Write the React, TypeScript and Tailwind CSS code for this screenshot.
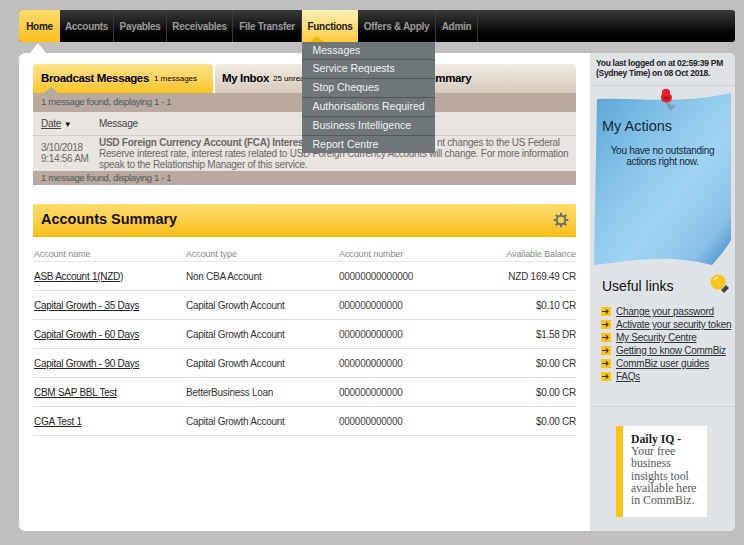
const navItems = [
  { label: "Home", w: "w-[41px]", active: "home" },
  { label: "Accounts", w: "w-[54px]" },
  { label: "Payables", w: "w-[53px]" },
  { label: "Receivables", w: "w-[66px]" },
  { label: "File Transfer", w: "w-[69px]" },
  { label: "Functions", w: "w-[56px]", active: "open" },
  { label: "Offers & Apply", w: "w-[78px]" },
  { label: "Admin", w: "w-[42px]" },
]

const menuItems = ["Messages", "Service Requests", "Stop Cheques", "Authorisations Required", "Business Intelligence", "Report Centre"]

const accounts = [
  { name: "ASB Account 1(NZD)", type: "Non CBA Account", number: "00000000000000", balance: "NZD 169.49 CR" },
  { name: "Capital Growth - 35 Days", type: "Capital Growth Account", number: "000000000000", balance: "$0.10 CR" },
  { name: "Capital Growth - 60 Days", type: "Capital Growth Account", number: "000000000000", balance: "$1.58 DR" },
  { name: "Capital Growth - 90 Days", type: "Capital Growth Account", number: "000000000000", balance: "$0.00 CR" },
  { name: "CBM SAP BBL Test", type: "BetterBusiness Loan", number: "000000000000", balance: "$0.00 CR" },
  { name: "CGA Test 1", type: "Capital Growth Account", number: "000000000000", balance: "$0.00 CR" },
]

const usefulLinks = ["Change your password", "Activate your security token", "My Security Centre", "Getting to know CommBiz", "CommBiz user guides", "FAQs"]

function Notch({ color, left }: { color: string; left: string }) {
  return (
    <svg className={`absolute bottom-0 ${left}`} width="14" height="6" viewBox="0 0 14 6">
      <path d="M0 6 7 0l7 6z" fill={color} />
    </svg>
  )
}

function Nav() {
  return (
    <nav className="flex h-[32px] rounded-[3px] bg-gradient-to-b from-[#3a3a3a] via-[#171717] to-black">
      {navItems.map((item) => (
        <div
          key={item.label}
          className={`relative flex ${item.w} shrink-0 items-center justify-center whitespace-nowrap text-[10px] font-bold tracking-[-0.3px] ${
            item.active === "home"
              ? "rounded-l-[3px] bg-gradient-to-b from-[#fedb6a] to-[#fbbf0a] text-[#1a1a1a]"
              : item.active === "open"
                ? "bg-gradient-to-b from-[#fff0b4] to-[#fbca32] text-[#1a1a1a]"
                : "border-r border-[#3a3a3a] text-[#9a9a9a]"
          }`}
        >
          {item.label}
          {item.active === "open" && <Notch color="#f5b400" left="left-[8px]" />}
        </div>
      ))}
    </nav>
  )
}

function FunctionsMenu() {
  return (
    <div className="absolute left-[302px] top-[42px] z-20 w-[133px]">
      {menuItems.map((item) => (
        <div key={item} className="flex h-[19px] items-center border-b border-[#50585c] bg-[#6e7679] pl-[10.5px] text-[10.5px] text-[#f2f2f2] first:h-[18px] last:h-[17px] last:border-b-0">
          {item}
        </div>
      ))}
    </div>
  )
}

function MessagesPanel() {
  return (
    <section className="text-[10px] tracking-[-0.26px] text-[#6c6866]">
      <div className="flex h-[29px] gap-[2px]">
        <div className="relative flex w-[180px] items-center rounded-t-[4px] bg-gradient-to-b from-[#fee388] to-[#fcc419] pl-[8px] text-black">
          <span className="text-[11.5px] font-bold tracking-[-0.36px]">Broadcast Messages</span>
          <span className="ml-[5px] text-[8px] tracking-normal">1 messages</span>
          <Notch color="#b9a99f" left="left-[11px]" />
        </div>
        <div className="flex flex-1 items-center rounded-t-[4px] bg-gradient-to-b from-[#f0ebe4] to-[#d8cabb] pl-[7px] text-black">
          <span className="text-[11.5px] font-bold tracking-[-0.36px]">My Inbox</span>
          <span className="ml-[4px] text-[8px] tracking-normal">25 unread</span>
          <span className="ml-[60px] text-[11.5px] font-bold tracking-[-0.36px]">Accounts Summary</span>
        </div>
      </div>
      <div className="flex h-[19px] items-center bg-[#b9a99f] pl-[8px] text-[9.5px] tracking-[-0.36px] text-[#4c5a5e]">1 message found, displaying 1 - 1</div>
      <div className="flex h-[23px] items-center bg-[#e8e4df] pl-[8px] text-[#444]">
        <span className="w-[58px]">
          <span className="underline">Date</span> <span className="text-[8px] text-black">▼</span>
        </span>
        <span>Message</span>
      </div>
      <div className="flex h-[36px] items-start border-t border-[#d4cec8] bg-[#e8e4df] pl-[8px] leading-[11px]">
        <div className="w-[58px] shrink-0 pt-[6px] tracking-[-0.3px]">
          3/10/2018
          <br />
          9:14:56 AM
        </div>
        <div className="whitespace-nowrap pt-[1px]">
          <span className="inline-block w-[338px] overflow-hidden align-bottom font-bold">USD Foreign Currency Account (FCA) Interest Rate</span>
          <span>nt changes to the US Federal</span>
          <br />
          Reserve interest rate, interest rates related to USD Foreign Currency Accounts will change. For more information
          <br />
          speak to the Relationship Manager of this service.
        </div>
      </div>
      <div className="flex h-[14px] items-center bg-[#b9a99f] pl-[8px] text-[9.5px] tracking-[-0.36px] text-[#4c5a5e]">1 message found, displaying 1 - 1</div>
    </section>
  )
}

function AccountsSummary() {
  return (
    <section className="mt-[19px]">
      <div className="flex h-[33px] items-center justify-between bg-gradient-to-b from-[#fedb6a] to-[#fbbf0a] pb-[2px] pl-[8px] pr-[7px]">
        <h2 className="text-[14.5px] font-bold text-[#111]">Accounts Summary</h2>
        <svg width="16" height="16" viewBox="0 0 24 24" fill="none" stroke="#6b7070" strokeWidth="3">
          <circle cx="12" cy="12" r="6.5" />
          <path d="M12 1v4M12 19v4M1 12h4M19 12h4M4.200 4.200l2.900 2.900M16.900 16.900l2.900 2.900M4.200 19.800l2.900-2.900M16.900 7.100l2.900-2.900" />
        </svg>
      </div>
      <div className="mt-[11px] flex h-[14px] border-b border-[#e6e6e6] text-[9px] tracking-[-0.1px] text-[#888]">
        <span className="w-[153px] pl-[1px]">Account name</span>
        <span className="w-[153px]">Account type</span>
        <span>Account number</span>
        <span className="ml-auto">Available Balance</span>
      </div>
      {accounts.map((a) => (
        <div key={a.name} className="flex h-[29px] items-center border-b border-[#dedede] text-[10px] tracking-[-0.27px] text-[#333]">
          <span className="w-[153px] pl-[1px] text-[#222] underline">{a.name}</span>
          <span className="w-[152px]">{a.type}</span>
          <span className="pl-[1px] text-[#444]">{a.number}</span>
          <span className="ml-auto">{a.balance}</span>
        </div>
      ))}
    </section>
  )
}

function StickyNote() {
  return (
    <div className="relative mx-[4px] mt-[7px] h-[172px] w-[137px]">
      <svg className="absolute inset-0" width="137" height="172" viewBox="0 0 137 172">
        <defs>
          <linearGradient id="note" x1="0" y1="0" x2="1" y2="1">
            <stop offset="0" stopColor="#5aa5d6" />
            <stop offset="0.3" stopColor="#82c1e6" />
            <stop offset="0.6" stopColor="#a0d4f2" />
            <stop offset="0.85" stopColor="#88c0e6" />
            <stop offset="1" stopColor="#3f86c6" />
          </linearGradient>
        </defs>
        <path d="M3 6C40 4 85 12 137 0L137 147C132 156 125 164 118 172 70 160 40 168 0 172Z" fill="url(#note)" />
      </svg>
      <svg className="absolute left-[65px] top-[-6px]" width="20" height="26" viewBox="0 0 20 26">
        <path d="M8 15l5 8M9 21l7-2" stroke="#7f9fb2" strokeWidth="3" />
        <path d="M3 4a4.500 4 0 0 1 8 0l0 3c2 1 2.500 3 1.500 5.500a5 3 0 0 1-10 0C1.500 10 2 8 3 7z" fill="#e3202c" />
        <ellipse cx="7.500" cy="11" rx="3.500" ry="1.800" fill="#b8141e" />
      </svg>
      <div className="relative pl-[8px] pt-[24px] text-[#13283a]">
        <h3 className="text-[14.5px] leading-[18px]">My Actions</h3>
        <p className="mt-[10px] pr-[8px] text-center text-[10px] leading-[11px] tracking-[-0.26px]">
          You have no outstanding
          <br />
          actions right now.
        </p>
      </div>
    </div>
  )
}

function Sidebar() {
  return (
    <aside className="flex w-[145px] shrink-0 flex-col rounded-r-[5px] bg-[#dfe3e6]">
      <div className="h-[33px] border-b border-[#cfd3d6] pl-[6px] pt-[6px] text-[8.5px] font-bold leading-[9.5px] tracking-[-0.3px] text-[#222]">
        You last logged on at 02:59:39 PM
        <br />
        (Sydney Time) on 08 Oct 2018.
      </div>
      <StickyNote />
      <div className="mt-[11px] flex h-[20px] items-center justify-between pl-[12px] pr-[5px]">
        <h3 className="text-[14px] text-[#111]">Useful links</h3>
        <svg className="-mt-[4px]" width="21" height="21" viewBox="0 0 21 21">
          <circle cx="9" cy="8" r="7.500" fill="#f8c51c" />
          <path d="M12 16l5-5 3 3-5 5z" fill="#444" />
          <path d="M5 6c1-2 2-3 4-3" stroke="#fdeb9c" strokeWidth="1.500" fill="none" />
        </svg>
      </div>
      <ul className="mt-[9px] pl-[11px]">
        {usefulLinks.map((l) => (
          <li key={l} className="flex h-[13px] items-center whitespace-nowrap text-[10px] tracking-[-0.25px] text-[#2c3038]">
            <span className="mr-[5.500px] flex h-[9px] w-[9.500px] shrink-0 items-center justify-center bg-[#fcc419]">
              <svg width="7" height="7" viewBox="0 0 8 8" fill="none" stroke="#333" strokeWidth="1.200">
                <path d="M0 4h7M4.500 1.500 7 4 4.500 6.500" />
              </svg>
            </span>
            <span className="underline">{l}</span>
          </li>
        ))}
      </ul>
      <div className="mt-[23px] flex flex-1 border-t border-[#cfd3d6] pl-[26px] pt-[19px]">
        <div className="h-[91px] w-[91px] border-l-[7px] border-[#fcc419] bg-white pl-[8px] pt-[8px] font-['Liberation_Serif',serif] text-[11.75px] leading-[12.200px] text-[#555]">
          <b className="text-[#222]">Daily IQ -</b>
          <br />
          Your free
          <br />
          business
          <br />
          insights tool
          <br />
          available here
          <br />
          in CommBiz.
        </div>
      </div>
    </aside>
  )
}

export default function App() {
  return (
    <div className="relative h-[545px] w-[744px] overflow-hidden bg-[#c0bebf] pl-[19px] pr-[9px] pt-[10px] font-['Liberation_Sans',Arial,sans-serif]">
      <Nav />
      <FunctionsMenu />
      <main className="relative mt-[11px] flex h-[478px] rounded-[6px] bg-white">
        <svg className="absolute left-[11px] top-[-10px]" width="16" height="10" viewBox="0 0 16 10">
          <path d="M0 10 8 0l8 10z" fill="#fff" />
        </svg>
        <div className="min-w-0 flex-1 pl-[14px] pr-[14px] pt-[11px]">
          <MessagesPanel />
          <AccountsSummary />
        </div>
        <Sidebar />
      </main>
    </div>
  )
}
